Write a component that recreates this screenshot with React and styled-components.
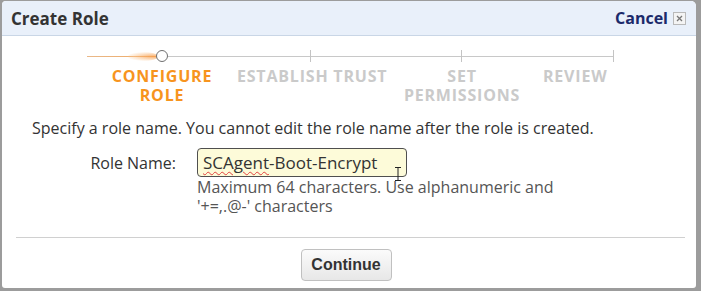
import React from "react";
import styled, { createGlobalStyle } from "styled-components";

const Global = createGlobalStyle`
  html, body { margin: 0; padding: 0; }
  body {
    background: #9c9c9c;
    width: 701px;
    height: 291px;
    overflow: hidden;
    font-family: "Open Sans", "Noto Sans", sans-serif;
  }
`;

const Dialog = styled.div`
  margin: 1px 0 0 2px;
  width: 694px;
  height: 287px;
  background: #fff;
  border-radius: 4px 5px 3px 3px;
  display: flex;
  flex-direction: column;
  overflow: hidden;
`;

const Header = styled.div`
  height: 34px;
  background: #e9f0fa;
  border-bottom: 1px solid #c9d6e6;
  display: flex;
  align-items: center;
  justify-content: space-between;
  padding: 0 10px 0 9px;
`;

const Title = styled.h1`
  margin: 0;
  font-size: 17px;
  font-weight: 700;
  color: #333;
`;

const CancelWrap = styled.div`
  display: flex;
  align-items: center;
  gap: 5px;
`;

const CancelLink = styled.a`
  font-size: 16px;
  font-weight: 700;
  color: #1b2a6b;
  text-decoration: none;
`;

const CloseBox = styled.span`
  width: 11px;
  height: 11px;
  border: 1px solid #b9b9b9;
  background: #f4f4f4;
  display: flex;
  align-items: center;
  justify-content: center;
`;

const Stepper = styled.div`
  margin: 13px 0 0 85px;
  width: 600px;
`;

const Track = styled.div`
  height: 14px;
  display: flex;
  align-items: center;
`;

const Lead = styled.div`
  position: relative;
  width: 69px;
  height: 1px;
  background: linear-gradient(to right, #e9b98a, #f0a860);
  &::after {
    content: "";
    position: absolute;
    right: -2px;
    top: -4px;
    width: 30px;
    height: 9px;
    border-radius: 50%;
    background: radial-gradient(ellipse at 85% 50%, rgba(247,160,80,0.8), rgba(250,200,150,0.4) 55%, rgba(255,255,255,0) 80%);
  }
`;

const Knob = styled.div`
  position: relative;
  z-index: 1;
  width: 10px;
  height: 10px;
  border: 1.5px solid #6f6f6f;
  border-radius: 50%;
  background: #fff;
  flex: none;
`;

const Segment = styled.div`
  width: ${(p) => p.$w}px;
  height: 12px;
  display: flex;
  align-items: center;
  border-right: 1px solid #c4c4c4;
  &::before {
    content: "";
    flex: 1;
    height: 1px;
    background: #c8c8c8;
  }
`;

const Labels = styled.div`
  margin-top: 4px;
  display: grid;
  grid-template-columns: 150px 150px 150px 150px;
`;

const StepLabel = styled.div`
  font-size: 16px;
  font-weight: 700;
  line-height: 19px;
  text-align: ${(p) => p.$align || "center"};
  padding-left: ${(p) => p.$pad || 0}px;
  color: ${(p) => (p.$active ? "#f7941e" : "#cacaca")};
  letter-spacing: 0.8px;
  white-space: nowrap;
`;

const Instruction = styled.p`
  margin: 13px 0 0 30px;
  font-size: 16px;
  line-height: 20px;
  color: #333;
`;

const FormRow = styled.div`
  margin-top: 10px;
  display: flex;
  align-items: flex-start;
`;

const FieldLabel = styled.label`
  width: 195px;
  padding-right: 21px;
  box-sizing: border-box;
  text-align: right;
  font-size: 16px;
  line-height: 29px;
  color: #333;
  padding-top: 1px;
`;

const Field = styled.div`
  display: flex;
  flex-direction: column;
`;

const InputBox = styled.div`
  position: relative;
  width: 210px;
  height: 29px;
  box-sizing: border-box;
  border: 1px solid #4f4f4f;
  border-radius: 4px;
  background: #fdfbd9;
  padding: 0 0 0 5px;
  display: flex;
  align-items: center;
  font-size: 17px;
  color: #333;
`;

const Squiggle = styled.span`
  text-decoration: underline wavy #e04040;
  text-decoration-thickness: 1px;
  text-underline-offset: 2px;
`;

const Cursor = styled.svg`
  position: absolute;
  left: 196px;
  top: 18px;
`;

const Help = styled.div`
  margin-top: 1px;
  font-size: 16px;
  line-height: 19px;
  color: #555;
`;

const Divider = styled.hr`
  margin: 21px 11px 0 14px;
  border: 0;
  border-top: 1px solid #d0d0d0;
  height: 0;
`;

const Footer = styled.div`
  margin-top: 11px;
  display: flex;
  justify-content: center;
  padding-right: 6px;
`;

const Button = styled.button`
  width: 91px;
  height: 32px;
  border: 1px solid #c0c0c0;
  border-radius: 4px;
  background: linear-gradient(#fbfbfb, #e7e7e7);
  font-family: "Liberation Sans", Arial, sans-serif;
  font-size: 16px;
  font-weight: 700;
  color: #333;
  padding: 0;
`;

export default function App() {
  return (
    <>
      <Global />
      <Dialog>
        <Header>
          <Title>Create Role</Title>
          <CancelWrap>
            <CancelLink href="#">Cancel</CancelLink>
            <CloseBox>
              <svg width="7" height="7" viewBox="0 0 7 7">
                <path d="M1 1L6 6M6 1L1 6" stroke="#777" strokeWidth="1.3" />
              </svg>
            </CloseBox>
          </CancelWrap>
        </Header>
        <Stepper>
          <Track>
            <Lead />
            <Knob />
            <Segment $w={142} />
            <Segment $w={150} />
            <Segment $w={151} />
          </Track>
          <Labels>
            <StepLabel $active>CONFIGURE<br />ROLE</StepLabel>
            <StepLabel>ESTABLISH TRUST</StepLabel>
            <StepLabel>SET<br />PERMISSIONS</StepLabel>
            <StepLabel $align="left" $pad={6}>REVIEW</StepLabel>
          </Labels>
        </Stepper>
        <Instruction>
          Specify a role name. You cannot edit the role name after the role is created.
        </Instruction>
        <FormRow>
          <FieldLabel>Role Name:</FieldLabel>
          <Field>
            <InputBox>
              <Squiggle>SCAgent</Squiggle>-Boot-Encrypt
              <Cursor width="8" height="14" viewBox="0 0 8 14">
                <path d="M1 0.5H7M4 0.5V13.5M1 13.5H7" stroke="#222" strokeWidth="1" fill="none" />
              </Cursor>
            </InputBox>
            <Help>
              Maximum 64 characters. Use alphanumeric and<br />'+=,.@-' characters
            </Help>
          </Field>
        </FormRow>
        <Divider />
        <Footer>
          <Button>Continue</Button>
        </Footer>
      </Dialog>
    </>
  );
}
